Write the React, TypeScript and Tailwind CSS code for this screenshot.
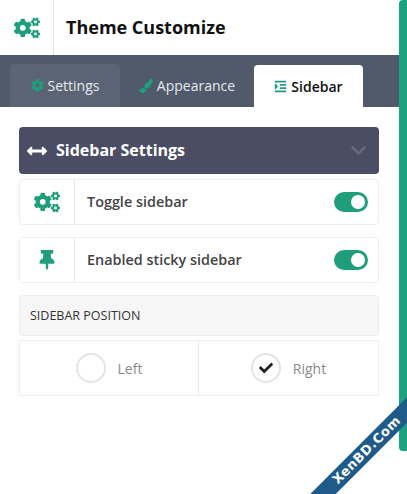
import React from 'react';
import { FaCogs, FaCog, FaPaintBrush, FaIndent, FaThumbtack, FaArrowsAltH, FaCheck, FaChevronDown } from 'react-icons/fa';

const Toggle = () => (
  <div className="w-[34px] h-5 rounded-full bg-[#1f9e7c] flex items-center justify-end pr-[3px]">
    <div className="w-[14px] h-[14px] rounded-full bg-white" />
  </div>
);

const OptionRow = ({ icon, label }: { icon: React.ReactNode; label: string }) => (
  <div className="h-[46px] flex items-center border border-[#eeeeee] rounded-[4px] bg-white">
    <div className="w-[55px] h-full flex items-center justify-center border-r border-[#e6e6e6] text-[#1f9e7c] shrink-0">
      {icon}
    </div>
    <span className="ml-3 text-[14.4px] font-semibold text-[#444444] grow pb-[1px]">{label}</span>
    <div className="mr-[10px]">
      <Toggle />
    </div>
  </div>
);

export default function App() {
  return (
    <div className="relative w-[407px] h-[494px] bg-white overflow-hidden font-['Open_Sans',sans-serif]">
      {/* Scrollbar */}
      <div className="absolute right-0 top-0 w-2 h-[451px] bg-[#1ba27f] rounded-bl-[4px] rounded-tl-[4px]" />

      {/* Header */}
      <div className="h-[55px] flex items-center">
        <div className="w-[54px] h-full flex items-center justify-center border-r border-[#e4e4e4] text-[#1f9e7c]">
          <FaCogs size={26} />
        </div>
        <h1 className="ml-3 text-[18px] font-bold text-[#111111]">Theme Customize</h1>
      </div>

      {/* Tabs */}
      <div className="h-[52px] w-[399px] bg-[#505a6b] flex items-end pl-[10px]">
        <div className="w-[110px] h-[43px] bg-[#5a6474] rounded-t-[4px] flex items-center justify-center gap-1 text-[14px] text-[#e6e8eb]">
          <FaCog size={13} className="text-[#1f9e7c]" />
          <span>Settings</span>
        </div>
        <div className="w-[134px] h-[43px] flex items-center justify-center gap-1 text-[14px] text-[#e6e8eb]">
          <FaPaintBrush size={14} className="text-[#1f9e7c]" />
          <span>Appearance</span>
        </div>
        <div className="w-[109px] h-[42px] bg-white rounded-t-[4px] flex items-center justify-center gap-1 text-[14px] font-semibold text-[#111111]">
          <FaIndent size={13} className="text-[#1f9e7c]" />
          <span>Sidebar</span>
        </div>
      </div>

      {/* Content */}
      <div className="w-[360px] ml-[19px] mt-5 flex flex-col">
        <div className="h-[47px] bg-[#4b4d64] rounded-[4px] flex items-center pl-2 pr-[12px] text-white">
          <FaArrowsAltH size={20} />
          <span className="ml-[9px] text-[16px] font-bold grow pb-[2px]">Sidebar Settings</span>
          <FaChevronDown size={17} className="text-[#676a7e]" />
        </div>
        <div className="mt-[5px]">
          <OptionRow icon={<FaCogs size={26} />} label="Toggle sidebar" />
        </div>
        <div className="mt-3">
          <OptionRow icon={<FaThumbtack size={20} />} label="Enabled sticky sidebar" />
        </div>
        <div className="mt-[12px] h-[41px] bg-[#f6f6f6] border border-[#ececec] rounded-[4px] flex items-center pl-[10px] pt-[1px] text-[12.5px] text-[#333333]">
          SIDEBAR POSITION
        </div>
        <div className="mt-1 h-[56px] border border-[#eeeeee] flex">
          <div className="w-[179px] border-r border-[#e8e8e8] flex items-center justify-center gap-3">
            <div className="w-[30px] h-[30px] rounded-full border-2 border-[#e4e4e4]" />
            <span className="text-[14px] text-[#8a8a8a]">Left</span>
          </div>
          <div className="grow flex items-center justify-center gap-3">
            <div className="w-[30px] h-[30px] rounded-full border-2 border-[#e4e4e4] flex items-center justify-center text-[#222222]">
              <FaCheck size={14} />
            </div>
            <span className="text-[14px] text-[#8a8a8a]">Right</span>
          </div>
        </div>
      </div>

      {/* Watermark ribbon */}
      <div className="absolute left-[271px] top-[437px] w-[200px] h-[18px] bg-[#1e5a8a] -rotate-45 flex items-center justify-center">
        <span className="text-[13px] font-bold text-white tracking-[0.5px] font-['DejaVu_Sans',sans-serif] -translate-x-[6px]">XenBD.Com</span>
      </div>
    </div>
  );
}
